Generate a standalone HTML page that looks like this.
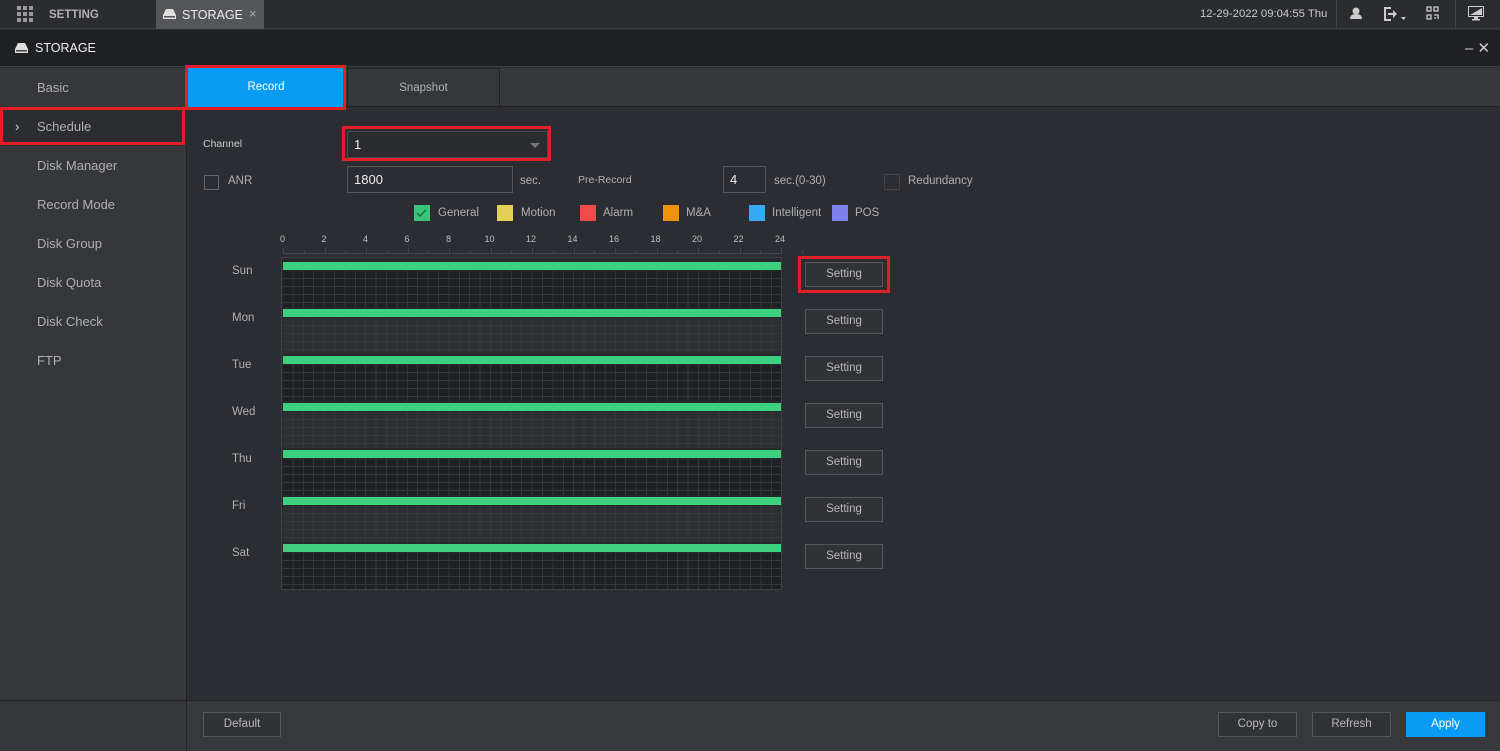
<!DOCTYPE html><html><head><style>
*{margin:0;padding:0;box-sizing:border-box}
body{width:1500px;height:751px;background:#2b2d32;font-family:"Liberation Sans",sans-serif;color:#b8b8b8;position:relative;overflow:hidden;font-size:11.5px}
.a{position:absolute}
.btn{position:absolute;border:1px solid #55575c;background:#303236;color:#b8b8b8;text-align:center;font-size:11.5px}
.red{position:absolute;border:3px solid #e31e26}
.sw{position:absolute;width:16px;height:16px;top:205px}
.lg{position:absolute;top:207px;font-size:11.5px;color:#b0b0b0}
.nav{position:absolute;left:37px;font-size:13px;color:#b0b0b0}
</style></head><body>
<div class="a" style="left:0;top:0;width:1500px;height:29px;background:#2a2c30;border-bottom:1px solid #3c3e42"></div>
<svg class="a" style="left:17px;top:6px" width="16" height="16"><g fill="#9a9a9a"><rect x="0" y="0" width="4" height="4"/><rect x="6" y="0" width="4" height="4"/><rect x="12" y="0" width="4" height="4"/><rect x="0" y="6" width="4" height="4"/><rect x="6" y="6" width="4" height="4"/><rect x="12" y="6" width="4" height="4"/><rect x="0" y="12" width="4" height="4"/><rect x="6" y="12" width="4" height="4"/><rect x="12" y="12" width="4" height="4"/></g></svg>
<div class="a" style="left:49px;top:9px;font-weight:bold;color:#b0b0b0;font-size:11.5px">SETTING</div>
<div class="a" style="left:156px;top:0;width:108px;height:29px;background:#54565a"></div>
<svg class="a" style="left:163px;top:9px" width="13" height="10"><path d="M3 0h7l3 6v4H0V6z" fill="#ddd"/><rect x="1" y="7" width="11" height="1.5" fill="#555"/></svg>
<div class="a" style="left:182px;top:8px;color:#eee;font-size:12.5px">STORAGE</div>
<div class="a" style="left:249px;top:6px;color:#aaa;font-size:13px">×</div>
<div class="a" style="left:1200px;top:8px;color:#ccc;font-size:11.3px">12-29-2022 09:04:55 Thu</div>
<div class="a" style="left:1336px;top:0;width:1px;height:29px;background:#444"></div>
<div class="a" style="left:1455px;top:0;width:1px;height:29px;background:#444"></div>
<svg class="a" style="left:1350px;top:7px" width="12" height="13"><circle cx="6" cy="4" r="3.5" fill="#ccc"/><path d="M0 12c0-4 3-5 6-5s6 1 6 5z" fill="#ccc"/></svg>
<svg class="a" style="left:1383px;top:6px" width="24" height="16"><path d="M1 1h7v2H3v10h5v2H1z" fill="#ccc"/><path d="M5 7h5V4l4 4-4 4V9H5z" fill="#ccc"/><path d="M18 11h5l-2.5 3z" fill="#ccc"/></svg>
<svg class="a" style="left:1426px;top:6px" width="13" height="14" fill="none" stroke="#ccc" stroke-width="1.3"><rect x="1" y="1" width="4" height="4"/><rect x="8" y="1" width="4" height="4"/><rect x="1" y="9" width="4" height="4"/><path d="M8 9h4v4M8 12h2"/></svg>
<svg class="a" style="left:1468px;top:6px" width="16" height="15"><rect x="0.5" y="0.5" width="15" height="10" fill="none" stroke="#ccc"/><path d="M2 9L14 2v7z" fill="#ccc"/><rect x="6" y="11" width="4" height="2" fill="#ccc"/><rect x="4" y="13" width="8" height="1.5" fill="#ccc"/></svg>
<div class="a" style="left:0;top:30px;width:1500px;height:37px;background:#1f2023;border-bottom:1px solid #3a3c40"></div>
<svg class="a" style="left:15px;top:43px" width="13" height="10"><path d="M3 0h7l3 6v4H0V6z" fill="#ddd"/><rect x="1" y="7" width="11" height="1.5" fill="#444"/></svg>
<div class="a" style="left:35px;top:41px;color:#eee;font-size:12.5px">STORAGE</div>
<div class="a" style="left:1465px;top:39px;color:#ccc;font-size:15px">– ✕</div>
<div class="a" style="left:0;top:68px;width:187px;height:683px;background:#35373b;border-right:1px solid #222"></div>
<div class="a" style="left:0;top:107px;width:187px;height:39px;background:#2b2d31"></div>
<div class="nav" style="top:80px">Basic</div>
<div class="a" style="left:15px;top:119px;font-size:13px;color:#ddd">›</div>
<div class="nav" style="top:119px">Schedule</div>
<div class="nav" style="top:158px">Disk Manager</div>
<div class="nav" style="top:197px">Record Mode</div>
<div class="nav" style="top:236px">Disk Group</div>
<div class="nav" style="top:275px">Disk Quota</div>
<div class="nav" style="top:314px">Disk Check</div>
<div class="nav" style="top:353px">FTP</div>
<div class="red" style="left:0;top:107px;width:185px;height:38px"></div>
<div class="a" style="left:187px;top:68px;width:1313px;height:39px;background:#35373b;border-bottom:1px solid #222"></div>
<div class="a" style="left:187px;top:67px;width:158px;height:41px;background:#0a9bf5;color:#fff;text-align:center;line-height:40px">Record</div>
<div class="red" style="left:185px;top:65px;width:161px;height:45px"></div>
<div class="a" style="left:347px;top:68px;width:153px;height:39px;border:1px solid #222;color:#b0b0b0;text-align:center;line-height:38px">Snapshot</div>
<div class="a" style="left:203px;top:138px;font-size:10.5px;color:#ccc">Channel</div>
<div class="a" style="left:347px;top:131px;width:201px;height:27px;border:1px solid #4a4c50;background:#2a2c30;padding-left:6px;line-height:25px;color:#eee;font-size:13px">1</div>
<div class="a" style="left:530px;top:143px;border-left:5px solid transparent;border-right:5px solid transparent;border-top:5px solid #777"></div>
<div class="red" style="left:342px;top:126px;width:209px;height:35px"></div>
<div class="a" style="left:204px;top:175px;width:15px;height:15px;border:1px solid #666"></div>
<div class="a" style="left:228px;top:175px;color:#b0b0b0">ANR</div>
<div class="a" style="left:347px;top:166px;width:166px;height:27px;border:1px solid #55575b;padding-left:6px;line-height:25px;color:#eee;font-size:13px">1800</div>
<div class="a" style="left:520px;top:175px;color:#b0b0b0">sec.</div>
<div class="a" style="left:578px;top:174px;color:#b0b0b0;font-size:10.5px">Pre-Record</div>
<div class="a" style="left:723px;top:166px;width:43px;height:27px;border:1px solid #55575b;padding-left:6px;line-height:25px;color:#eee;font-size:13px">4</div>
<div class="a" style="left:774px;top:175px;color:#b0b0b0">sec.(0-30)</div>
<div class="a" style="left:884px;top:174px;width:16px;height:16px;border:1px solid #444"></div>
<div class="a" style="left:908px;top:175px;color:#b0b0b0">Redundancy</div>
<div class="sw" style="left:414px;background:#3cc37a"><svg width="16" height="16"><path d="M3 8l3 3 6-6" stroke="#1b6b3f" fill="none" stroke-width="1.4"/></svg></div><div class="lg" style="left:438px">General</div>
<div class="sw" style="left:497px;background:#e4cf55"></div><div class="lg" style="left:521px">Motion</div>
<div class="sw" style="left:580px;background:#f14a4a"></div><div class="lg" style="left:603px">Alarm</div>
<div class="sw" style="left:663px;background:#f1920b"></div><div class="lg" style="left:686px">M&amp;A</div>
<div class="sw" style="left:749px;background:#34aaf5"></div><div class="lg" style="left:772px">Intelligent</div>
<div class="sw" style="left:832px;background:#7c80e8"></div><div class="lg" style="left:855px">POS</div>
<div id="ticks"></div>
<div class="a" style="left:281px;top:257px;width:501px;height:333px;border:1px solid #3e4044;background:#26282c"></div>
<div id="grid"></div>
<div class="a" style="left:0;top:700px;width:1500px;height:51px;background:#36383c;border-top:1px solid #222"></div>
<div class="a" style="left:0;top:701px;width:187px;height:50px;background:#35373b"></div>
<div class="a" style="left:186px;top:700px;width:1px;height:51px;background:#222"></div>
<div class="btn" style="left:203px;top:712px;width:78px;height:25px;line-height:23px">Default</div>
<div class="btn" style="left:1218px;top:712px;width:79px;height:25px;line-height:23px">Copy to</div>
<div class="btn" style="left:1312px;top:712px;width:79px;height:25px;line-height:23px">Refresh</div>
<div class="btn" style="left:1406px;top:712px;width:79px;height:25px;line-height:23px;background:#0a9bf5;border-color:#0a9bf5;color:#fff">Apply</div>
<script>
var days=["Sun","Mon","Tue","Wed","Thu","Fri","Sat"],h="";
for(var i=0;i<7;i++){var t=260+47*i;
h+='<div class="a" style="left:232px;top:'+(t+5)+'px;color:#b0b0b0">'+days[i]+'</div>';
h+='<div class="a" style="left:283px;top:'+(t+2)+'px;width:498px;height:8px;background:#3dd07e"></div>';
h+='<div class="a" style="left:283px;top:'+(t+11)+'px;width:498px;height:36px;background-color:'+(i%2?'#2c2e32':'#1f2024')+';background-image:repeating-linear-gradient(90deg,transparent 0 9.4px,#35373b 9.4px 10.4px),repeating-linear-gradient(180deg,transparent 0 7px,#35373b 7px 8px)"></div>';
h+='<div class="btn" style="left:805px;width:78px;height:25px;line-height:23px;top:'+(t+2)+'px">Setting</div>';}
h+='<div class="red" style="left:798px;top:256px;width:92px;height:37px"></div>';
document.getElementById("grid").innerHTML=h;
var k="";for(var j=0;j<=12;j++){var x=283+j*41.5;k+='<div class="a" style="left:'+(x-(j<5?3:6))+'px;top:234px;font-size:9px;color:#c0c0c0">'+(j*2)+'</div>';k+='<div class="a" style="left:'+Math.round(x)+'px;top:248px;width:1px;height:6px;background:#44464a"></div>';k+='<div class="a" style="left:'+Math.round(x+20.75)+'px;top:251px;width:1px;height:3px;background:#44464a"></div>';}
k+='<div class="a" style="left:283px;top:253px;width:498px;height:1px;background:#44464a"></div>';
document.getElementById("ticks").innerHTML=k;
</script>
</body></html>
